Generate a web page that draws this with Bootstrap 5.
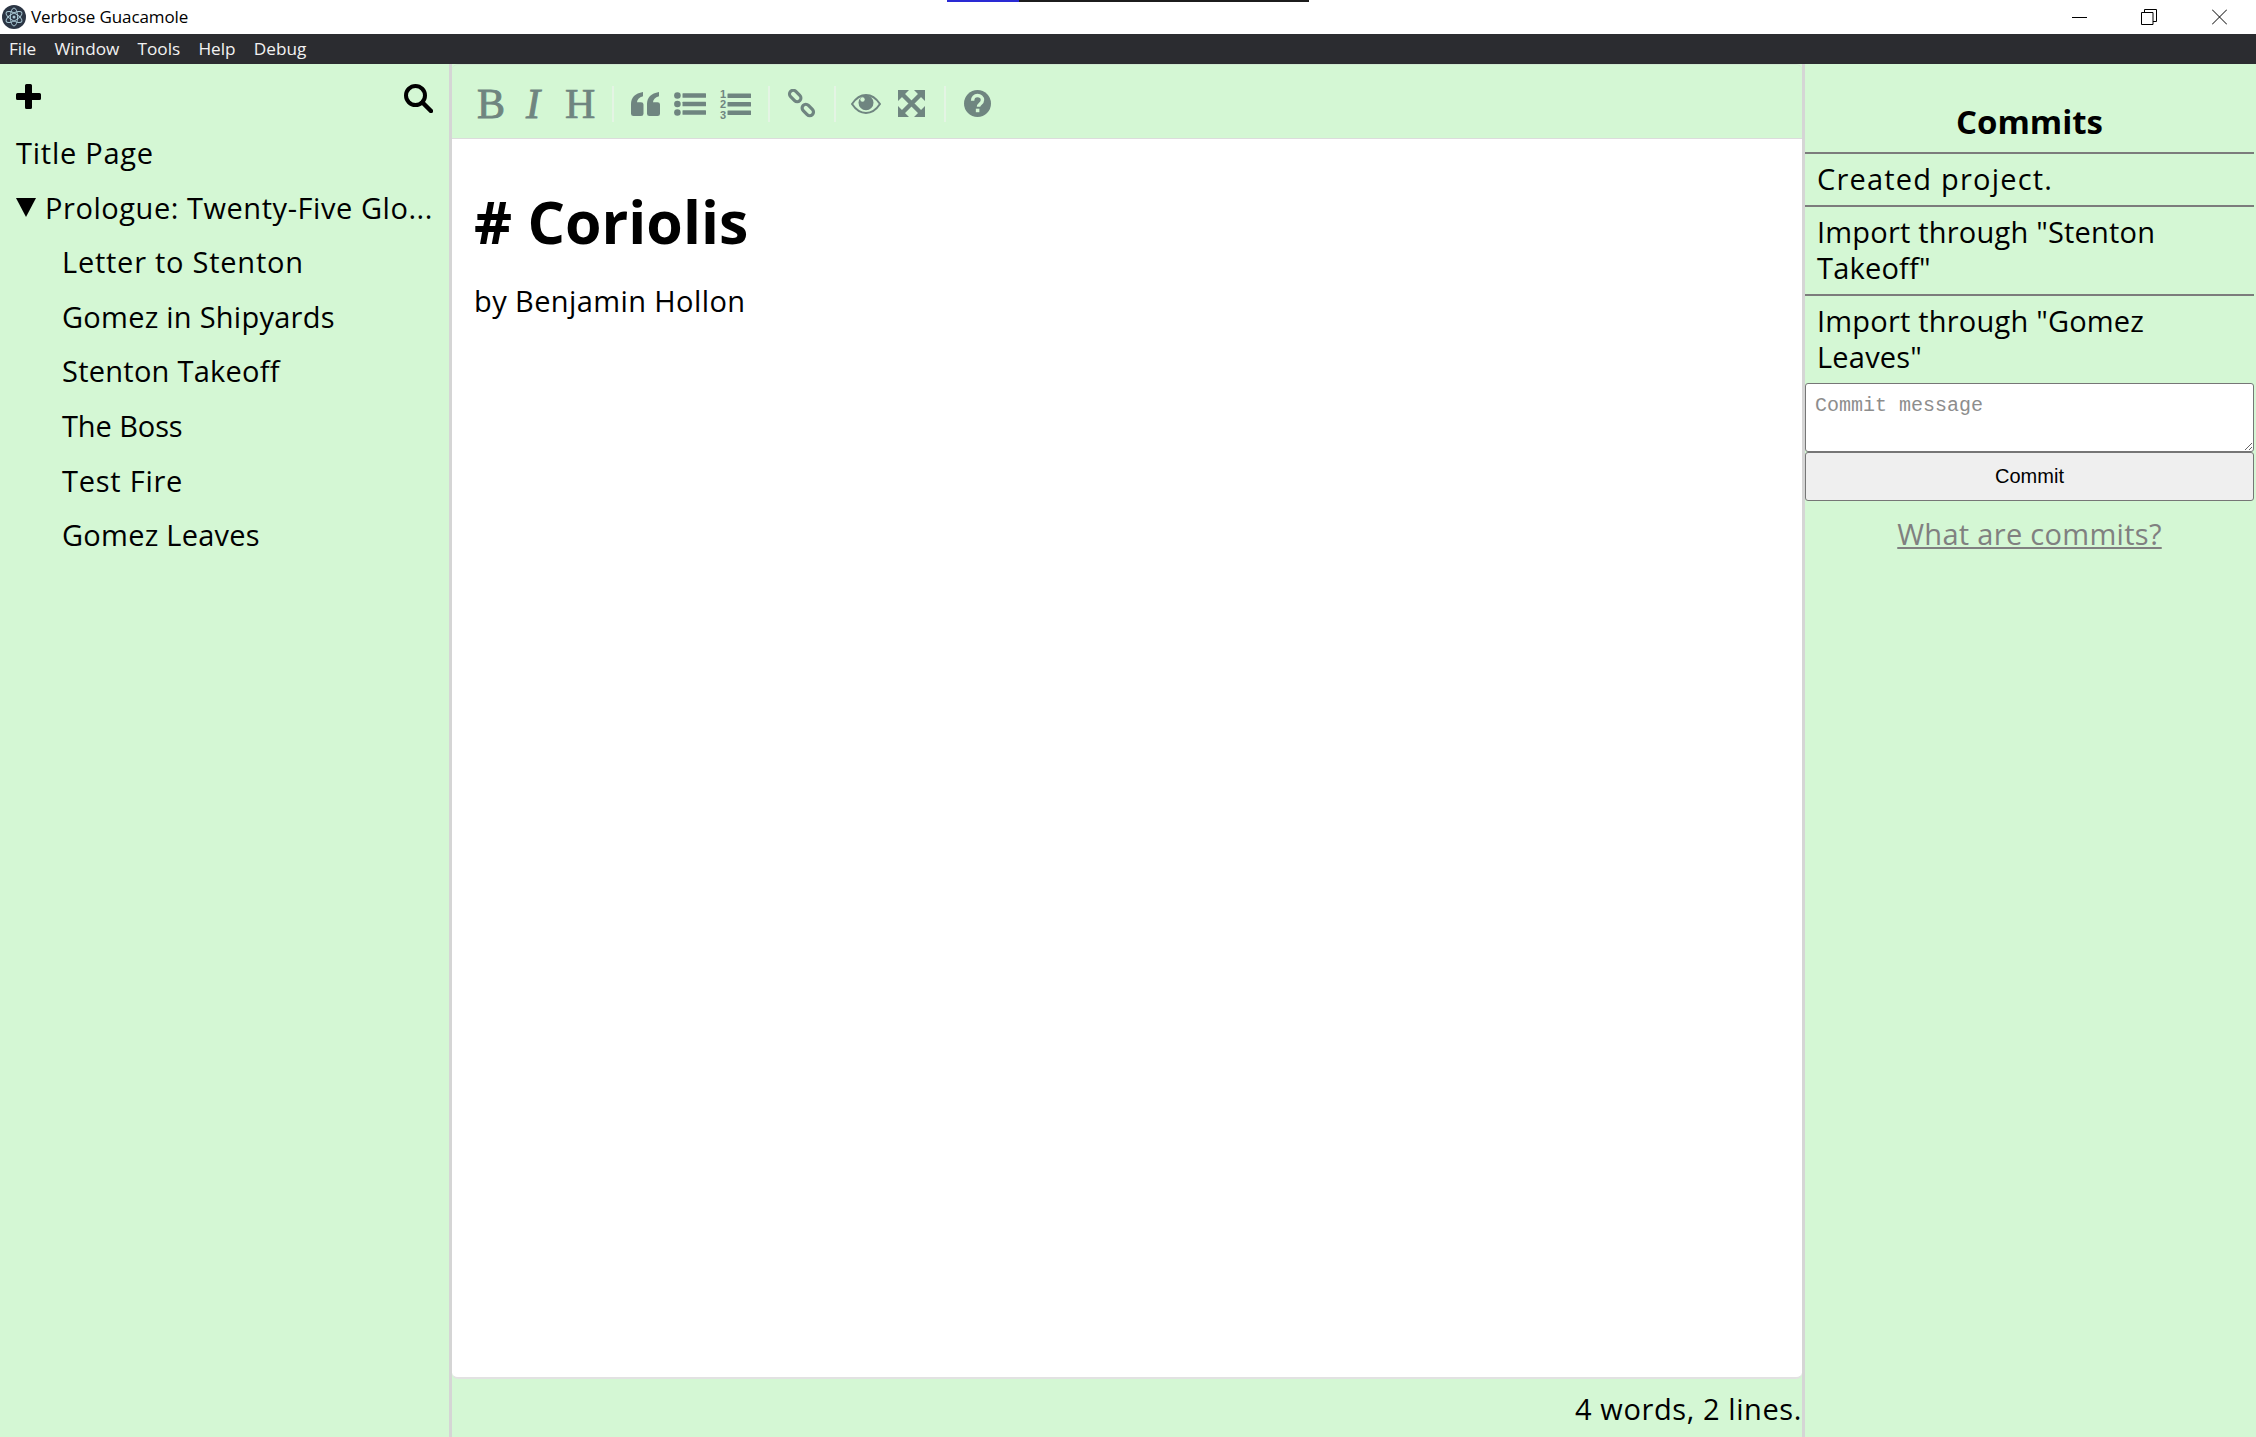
<!DOCTYPE html>
<html lang="en">
<head>
<meta charset="utf-8">
<title>Verbose Guacamole</title>
<link href="https://cdn.jsdelivr.net/npm/bootstrap@5.3.0/dist/css/bootstrap.min.css" rel="stylesheet">
<style>
html,body{height:100%;margin:0;overflow:hidden}
body{font-family:"Open Sans","Noto Sans",sans-serif;color:#000;background:#d4f7d4}
.app-shell{height:1437px;width:2256px}
.load-strip{height:2px;width:362px;left:947px;top:0;background:linear-gradient(90deg,#2a2ad4 72px,#1c1c1c 72px)}
.title-strip{height:34px;background:#fff;font-size:17px;padding-left:2px;gap:5px;letter-spacing:-.1px}
.win-btns{margin-right:29px}
.win-btns svg{display:block}
.menu-strip{height:30px;background:#2b2c30;color:#f2f2f2;font-size:17.200px;padding-left:9px;gap:18.200px}
.main-row{height:1373px;background:#d4f7d4}
.side-pane{width:449px;padding:0 16px}
.side-tools{height:62px;padding-top:20px}
.side-item{height:54.600px;line-height:54.600px;font-size:29px;letter-spacing:.25px;white-space:nowrap}
.side-child{padding-left:46px}
.sp-wide{letter-spacing:.75px}
.sp-mid{letter-spacing:.55px}
.sp-tight{letter-spacing:-.1px}
.tri{width:0;height:0;border-left:10px solid transparent;border-right:10px solid transparent;border-top:19px solid #000;margin-right:9px;flex:none}
.centre-pane{width:1356px;border-left:3px solid #d5d5d5;border-right:3px solid #d5d5d5}
.tool-strip{height:75px;border-bottom:1px solid #dcdcdc;border-top:1px solid #cfe8cf;border-radius:6px 6px 0 0;padding:4px 0 0 25px;color:#6f8580}
.tool-strip svg{flex:none}
.glyph-b{font:400 42px/1 "Liberation Serif",serif;width:49px;-webkit-text-stroke:.9px #6f8580}
.glyph-i{font:italic 400 42px/1 "Liberation Serif",serif;width:39px;-webkit-text-stroke:.9px #6f8580}
.glyph-h{font:400 42px/1 "Liberation Serif",serif;width:47px;-webkit-text-stroke:.7px #6f8580}
.tool-sep{width:2px;height:36px;background:#e4f4e4;flex:none}
.ml-n{margin-left:13px}
.ml-m{margin-left:14px}
.ml-a{margin-left:15px}
.ml-c{margin-left:17px}
.ml-d{margin-left:18px}
.ml-e{margin-left:19px}
.editor-page{flex:1;background:#fff;border-radius:0 0 6px 6px;padding:42px 22px;border-bottom:2px solid #e2e2e2}
.doc-h{font-size:59px;font-weight:700;line-height:81px;margin:0}
.doc-p{font-size:29px;line-height:40px;margin:19px 0 0;letter-spacing:.4px}
.status-strip{height:58px;font-size:29px;letter-spacing:.6px;padding-top:2px}
.commit-pane{flex:1;padding:0 2px 0 0}
.commit-h{font-size:33px;font-weight:700;text-align:center;height:90px;margin:0;padding-top:33px;line-height:50px;border-bottom:2px solid #7c7c7c}
.commit-row{font-size:29px;line-height:36px;padding:7px 12px 8px;letter-spacing:.2px;border-bottom:2px solid #7c7c7c}
.commit-row:last-of-type{border-bottom:0;padding-bottom:8px}
.commit-row.sp-first{letter-spacing:1.2px}
.commit-in{display:block;width:100%;height:69px;border:1px solid #767676;border-radius:3px;font:20px/1.1 "Liberation Mono",monospace;padding:11px 9px;background:#fff;box-shadow:none}
.commit-in::placeholder{color:#8d8d8d}
.commit-go{display:block;width:100%;height:49px;background:#efefef;border:1px solid #767676;border-radius:3px;font:20px "Liberation Sans",sans-serif;color:#000;padding:0}
.commit-help{color:#808080;font-size:29px;letter-spacing:.3px;text-align:center;display:block;margin-top:13px;line-height:40px}
.commit-help:hover{color:#808080}
.num-tiny{font:700 11px "Liberation Sans",sans-serif;fill:#6f8580}
</style>
</head>
<body>
<div class="app-shell d-flex flex-column position-relative">
  <div class="load-strip position-absolute"></div>
  <div class="title-strip d-flex align-items-center">
    <svg width="24" height="24" viewBox="0 0 24 24"><circle cx="12" cy="12" r="12" fill="#2b3544"/><g fill="none" stroke="#a9c8d4" stroke-width="1"><ellipse cx="12" cy="12" rx="9" ry="3.600" transform="rotate(30 12 12)"/><ellipse cx="12" cy="12" rx="9" ry="3.600" transform="rotate(-30 12 12)"/><ellipse cx="12" cy="12" rx="9" ry="3.600" transform="rotate(90 12 12)"/></g><circle cx="12" cy="12" r="1.500" fill="#a9c8d4"/></svg>
    <span>Verbose Guacamole</span>
    <div class="win-btns ms-auto d-flex">
      <svg width="69" height="16" viewBox="0 0 69 16"><path d="M0 8.500h15" stroke="#000" fill="none"/></svg>
      <svg width="71" height="16" viewBox="0 0 71 16"><path d="M.5 3.500h11.500v12h-11.500zM3.500 3.500v-3h12v12h-3.500" stroke="#000" fill="none"/></svg>
      <svg width="15" height="16" viewBox="0 0 15 16"><path d="M0 .5l15 15M15 .5l-15 15" stroke="#000" fill="none"/></svg>
    </div>
  </div>
  <div class="menu-strip d-flex align-items-center">
    <span>File</span><span>Window</span><span>Tools</span><span>Help</span><span>Debug</span>
  </div>
  <div class="main-row d-flex">
    <aside class="side-pane flex-shrink-0">
      <div class="side-tools d-flex justify-content-between align-items-start">
        <svg width="25" height="25" viewBox="0 0 25 25"><path d="M9 1.500a1.500 1.500 0 0 1 1.500-1.500h4a1.500 1.500 0 0 1 1.500 1.500v7.500h7.500a1.500 1.500 0 0 1 1.500 1.500v4a1.500 1.500 0 0 1-1.500 1.500h-7.500v7.500a1.500 1.500 0 0 1-1.500 1.500h-4a1.500 1.500 0 0 1-1.500-1.500v-7.500h-7.500a1.500 1.500 0 0 1-1.500-1.500v-4a1.500 1.500 0 0 1 1.500-1.500h7.500z" fill="#000"/></svg>
        <svg width="29" height="29" viewBox="0 0 29 29"><circle cx="11.500" cy="11.500" r="9.500" fill="none" stroke="#000" stroke-width="4"/><path d="M18.500 18.500l8.500 8.500" stroke="#000" stroke-width="4.500" stroke-linecap="round"/></svg>
      </div>
      <div class="side-item sp-wide">Title Page</div>
      <div class="side-item sp-mid d-flex align-items-center"><span class="tri"></span><span>Prologue: Twenty-Five Glo...</span></div>
      <div class="side-item side-child sp-wide">Letter to Stenton</div>
      <div class="side-item side-child">Gomez in Shipyards</div>
      <div class="side-item side-child">Stenton Takeoff</div>
      <div class="side-item side-child sp-tight">The Boss</div>
      <div class="side-item side-child sp-wide">Test Fire</div>
      <div class="side-item side-child">Gomez Leaves</div>
    </aside>
    <main class="centre-pane d-flex flex-column flex-shrink-0">
      <div class="tool-strip d-flex align-items-center">
        <span class="glyph-b">B</span><span class="glyph-i">I</span><span class="glyph-h">H</span>
        <span class="tool-sep"></span>
        <svg class="ml-c" width="29" height="24" viewBox="0 0 29 26" preserveAspectRatio="none" fill="#6f8580"><path d="M0 13C0 6 4 1.500 12 0v4.500C8 5.500 6 8.500 6 11h4a2.500 2.500 0 0 1 2.500 2.500v10A2.500 2.500 0 0 1 10 26H2.500A2.500 2.500 0 0 1 0 23.500zM16 13c0-7 4-11.500 12-13v4.500c-4 1-6 4-6 6.500h4.500a2.500 2.500 0 0 1 2.500 2.500v10a2.500 2.500 0 0 1-2.500 2.500h-8A2.500 2.500 0 0 1 16 23.500z"/></svg>
        <svg class="ml-m" width="32" height="24" viewBox="0 0 32 24" fill="#6f8580"><circle cx="3.400" cy="3.500" r="3.300"/><circle cx="3.400" cy="12" r="3.300"/><circle cx="3.400" cy="20.500" r="3.300"/><rect x="8.500" y="1.200" width="23.500" height="4.500" rx=".5"/><rect x="8.500" y="9.700" width="23.500" height="4.500" rx=".5"/><rect x="8.500" y="18.300" width="23.500" height="4.500" rx=".5"/></svg>
        <svg class="ml-n" width="32" height="32" viewBox="0 0 32 32" fill="#6f8580"><rect x="8.500" y="5.500" width="23.500" height="4.500" rx=".5"/><rect x="8.500" y="14" width="23.500" height="4.500" rx=".5"/><rect x="8.500" y="22.500" width="23.500" height="4.500" rx=".5"/><text class="num-tiny" x="1" y="9.500">1</text><text class="num-tiny" x="1" y="20">2</text><text class="num-tiny" x="1" y="30.500">3</text></svg>
        <span class="tool-sep ml-c"></span>
        <svg class="ml-c" width="29" height="29" viewBox="0 0 29 29" fill="none" stroke="#6f8580" stroke-width="3.200"><rect x="1.700" y="3.300" width="13" height="7.400" rx="3.700" transform="rotate(45 8.200 7)"/><rect x="14.300" y="17.300" width="13" height="7.400" rx="3.700" transform="rotate(45 20.800 21)"/></svg>
        <span class="tool-sep ml-d"></span>
        <svg class="ml-a" width="30" height="20" viewBox="0 0 30 20"><path d="M1 10C5 4 10 1 15 1s10 3 14 9c-4 6-9 9-14 9S5 16 1 10z" fill="none" stroke="#6f8580" stroke-width="2"/><circle cx="15" cy="8.800" r="7.500" fill="#6f8580"/><circle cx="11.500" cy="5.500" r="2.200" fill="#d4f7d4"/></svg>
        <svg class="ml-c" width="27" height="27" viewBox="0 0 27 27" fill="#6f8580"><path d="M0 0h11L0 11zM27 0v11L16 0zM0 27V16l11 11zM27 27H16l11-11z"/><path d="M4 4l19 19M23 4L4 23" stroke="#6f8580" stroke-width="4.500" fill="none"/></svg>
        <span class="tool-sep ml-e"></span>
        <svg class="ml-d" width="27" height="27" viewBox="0 0 26 26"><circle cx="13" cy="13" r="13" fill="#6f8580"/><path d="M8.300 10.300c0-3 2-5 4.700-5s4.800 1.800 4.800 4.300c0 3.600-3.800 3.500-3.800 6.500" fill="none" stroke="#d4f7d4" stroke-width="3.300"/><path d="M11.400 18h3.400v3.400h-3.400z" fill="#d4f7d4"/></svg>
      </div>
      <div class="editor-page">
        <h1 class="doc-h"># Coriolis</h1>
        <p class="doc-p">by Benjamin Hollon</p>
      </div>
      <div class="status-strip d-flex align-items-center justify-content-end">4 words, 2 lines.</div>
    </main>
    <section class="commit-pane d-flex flex-column">
      <h2 class="commit-h">Commits</h2>
      <div class="commit-row sp-first">Created project.</div>
      <div class="commit-row">Import through "Stenton Takeoff"</div>
      <div class="commit-row">Import through "Gomez Leaves"</div>
      <textarea class="commit-in" placeholder="Commit message"></textarea>
      <button class="commit-go" type="button">Commit</button>
      <a class="commit-help" href="#">What are commits?</a>
    </section>
  </div>
</div>
<script src="https://cdn.jsdelivr.net/npm/bootstrap@5.3.0/dist/js/bootstrap.bundle.min.js"></script>
</body>
</html>
